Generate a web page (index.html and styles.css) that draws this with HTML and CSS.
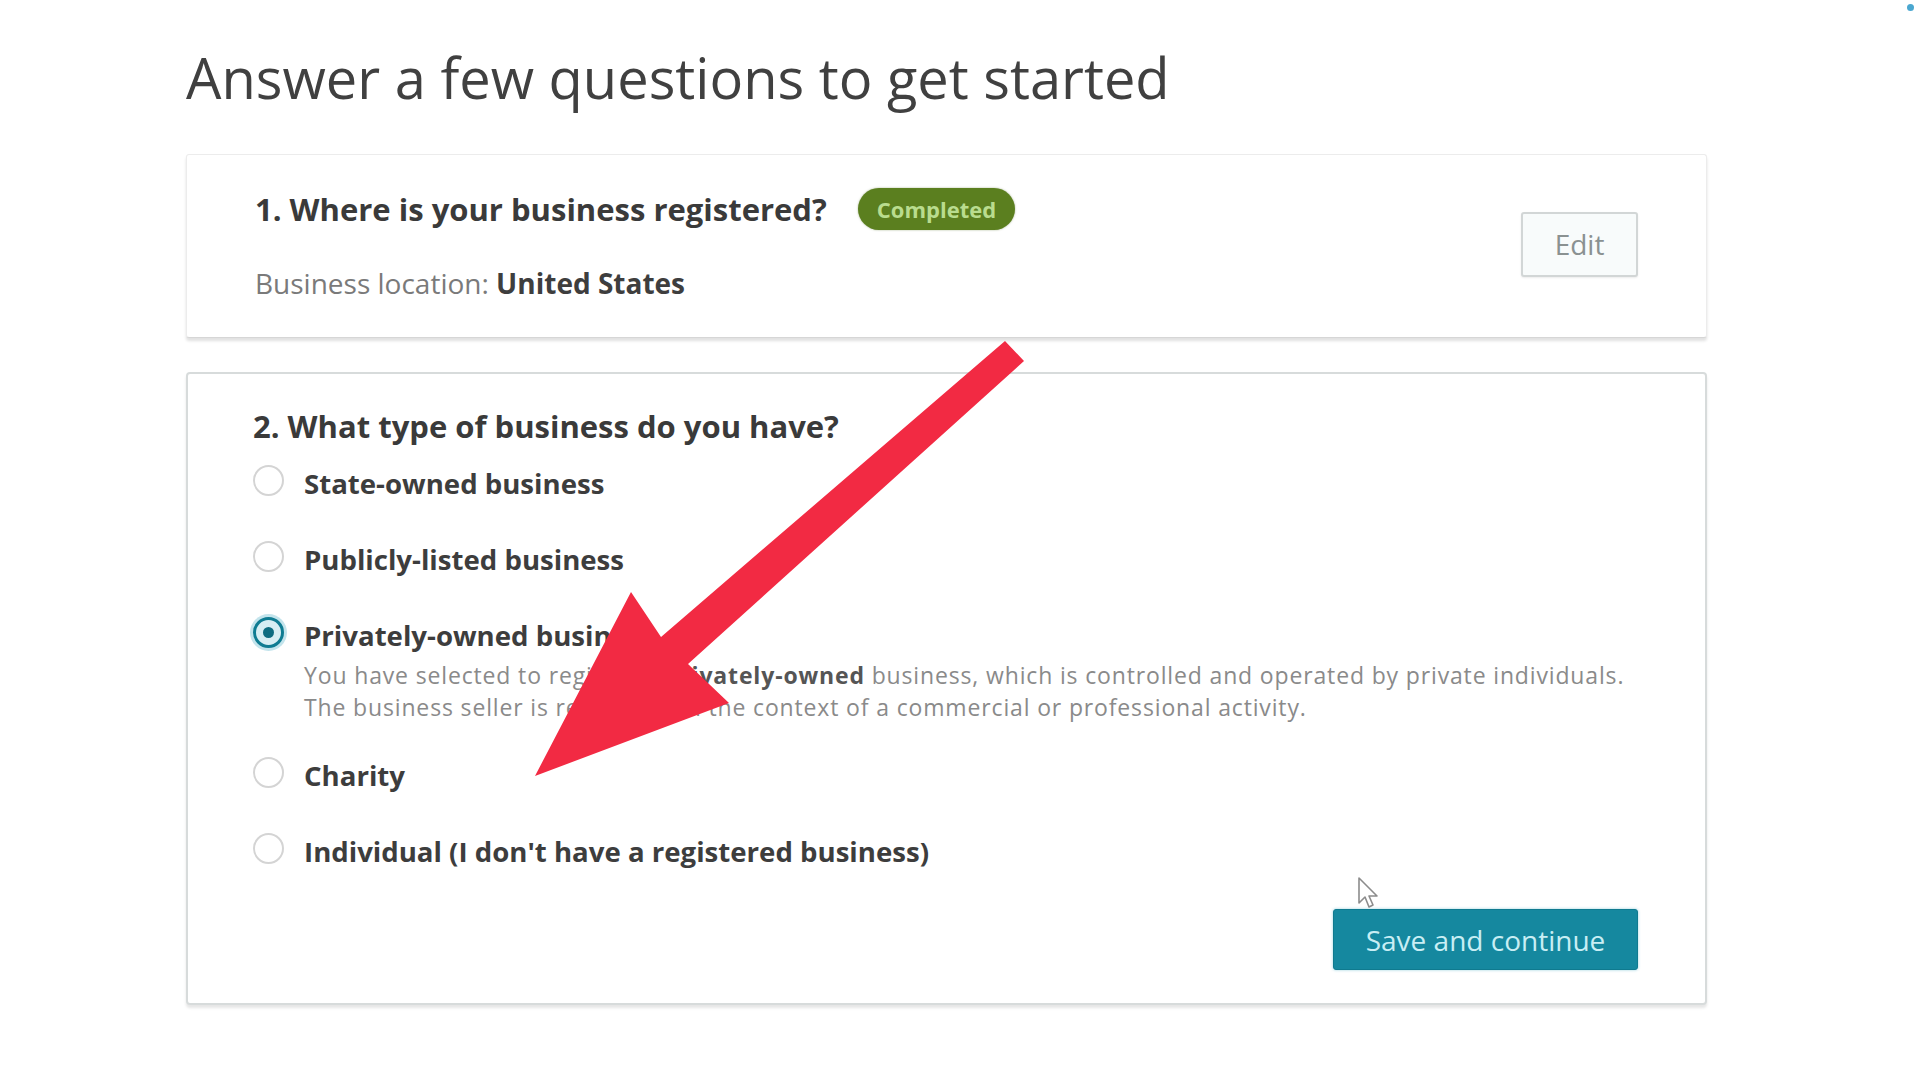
FILE: index.html
```html
<!DOCTYPE html>
<html lang="en">
<head>
<meta charset="utf-8">
<title>Answer a few questions to get started</title>
<link rel="stylesheet" href="styles.css">
</head>
<body>
<div class="page">
  <h1 class="title">Answer a few questions to get started</h1>

  <section class="card card-done">
    <div class="card-main">
      <div class="q-row">
        <h2 class="question">1. Where is your business registered?</h2>
        <span class="badge">Completed</span>
      </div>
      <p class="location">Business location: <b>United States</b></p>
    </div>
    <button class="btn-edit" type="button">Edit</button>
  </section>

  <section class="card card-active">
    <h2 class="question">2. What type of business do you have?</h2>
    <div class="options">
      <label class="option"><span class="radio"></span><span class="opt-text">State-owned business</span></label>
      <label class="option"><span class="radio"></span><span class="opt-text">Publicly-listed business</span></label>
      <div class="option-group">
        <label class="option"><span class="radio radio-on"></span><span class="opt-text">Privately-owned business</span></label>
        <p class="desc">You have selected to register a <b>privately-owned</b> business, which is controlled and operated by private individuals.<br>The business seller is registered in the context of a commercial or professional activity.</p>
      </div>
      <label class="option"><span class="radio"></span><span class="opt-text">Charity</span></label>
      <label class="option"><span class="radio"></span><span class="opt-text">Individual (I don't have a registered business)</span></label>
    </div>
    <div class="actions">
      <button class="btn-save" type="button">Save and continue</button>
    </div>
  </section>
</div>

<svg class="arrow" width="1915" height="1077" viewBox="0 0 1915 1077" aria-hidden="true">
  <polygon points="1005,341 1024,361 688,664 729,703 535,776 631,592 661,637" fill="#f22a43"/>
</svg>

<svg class="cursor" width="24" height="34" viewBox="0 0 24 34" aria-hidden="true">
  <path d="M2 2 L2 27 L8 21 L12 31 L16 29 L12 20 L20 20 Z" fill="#ffffff" stroke="#8c8c8c" stroke-width="1.6" stroke-linejoin="round"/>
</svg>

<span class="corner-dot"></span>
</body>
</html>
```

FILE: styles.css
```css
html, body {
  margin: 0;
  padding: 0;
  background: #ffffff;
}

body {
  font-family: "Open Sans", "Noto Sans", "Liberation Sans", sans-serif;
  color: #3a3a3a;
  width: 1915px;
  height: 1077px;
  overflow: hidden;
  position: relative;
}

.page {
  margin-left: 186px;
  width: 1521px;
  padding-top: 45px;
}

.title {
  margin: 0 0 45px 0;
  font-size: 56px;
  line-height: 64px;
  font-weight: 400;
  color: #404040;
  letter-spacing: 0;
}

.card {
  box-sizing: border-box;
  background: #ffffff;
}

.card-done {
  display: flex;
  align-items: center;
  justify-content: space-between;
  height: 184px;
  padding: 33px 68px 37px 68px;
  border: 1px solid #ececec;
  border-bottom: 1px solid #d6d6d6;
  box-shadow: 0 3px 3px rgba(0, 0, 0, 0.12);
  border-radius: 3px;
}

.card-main {
  display: flex;
  flex-direction: column;
  gap: 35px;
}

.q-row {
  display: flex;
  align-items: center;
  gap: 31px;
}

.question {
  margin: 0;
  font-size: 31px;
  line-height: 40px;
  font-weight: 700;
  color: #3a3a3a;
}

.badge {
  display: inline-flex;
  align-items: center;
  justify-content: center;
  height: 42px;
  padding: 0 19px;
  border-radius: 21px;
  background: #5b7f1f;
  color: #b9dc8e;
  font-size: 22px;
  font-weight: 700;
  box-sizing: border-box;
  box-shadow: 0 0 2px rgba(70, 100, 20, 0.5);
}

.location {
  margin: 0;
  font-size: 28px;
  line-height: 36px;
  color: #7a7a7a;
}

.location b {
  color: #3e3e3e;
  font-weight: 700;
}

.btn-edit {
  width: 117px;
  height: 65px;
  border: 2px solid #d2d6d6;
  border-radius: 3px;
  background: #f8fbfb;
  color: #8a9191;
  font-family: inherit;
  font-size: 28px;
  padding: 0;
  box-shadow: 0 1px 2px rgba(0, 0, 0, 0.08);
}

.card-active {
  margin-top: 34px;
  height: 633px;
  padding: 32px 66px 32px 65px;
  border: 2px solid #d7dbdb;
  border-radius: 4px;
  box-shadow: 0 3px 3px rgba(0, 0, 0, 0.10);
}

.options {
  display: flex;
  flex-direction: column;
  gap: 40px;
  margin-top: 19px;
}

.option {
  display: flex;
  align-items: center;
  gap: 20px;
  height: 36px;
}

.opt-text {
  font-size: 27.6px;
  line-height: 36px;
  font-weight: 700;
  color: #3d3d3d;
}

.radio {
  box-sizing: border-box;
  width: 31px;
  height: 31px;
  border-radius: 50%;
  border: 2px solid #d4d4d4;
  background: #ffffff;
  flex: none;
  position: relative;
  top: -3px;
}

.radio-on {
  border: 3px solid #0f7c92;
  background: #d7eef3;
  box-shadow: 0 0 0 3px #c3e4ec;
}

.radio-on::after {
  content: "";
  position: absolute;
  left: 50%;
  top: 50%;
  width: 11px;
  height: 11px;
  margin: -5.5px 0 0 -5.5px;
  border-radius: 50%;
  background: #0d6c80;
}

.desc {
  margin: 6px 0 -6px 51px;
  font-size: 23px;
  line-height: 32px;
  letter-spacing: 0.85px;
  color: #8a8a8a;
}

.desc b {
  color: #555555;
  font-weight: 700;
}

.actions {
  display: flex;
  justify-content: flex-end;
  margin-top: 40px;
  margin-right: 1px;
}

.btn-save {
  width: 305px;
  height: 61px;
  border: 1px solid #0f7a8f;
  border-radius: 3px;
  background: #15889f;
  color: #c8eef4;
  font-family: inherit;
  font-size: 28px;
  padding: 0;
  box-shadow: 0 0 3px rgba(20, 150, 180, 0.45);
}

.arrow {
  position: absolute;
  left: 0;
  top: 0;
  pointer-events: none;
}

.cursor {
  position: absolute;
  left: 1357px;
  top: 876px;
}

.corner-dot {
  position: absolute;
  left: 1907px;
  top: 4px;
  width: 7px;
  height: 7px;
  border-radius: 50%;
  background: #4aa7d0;
}
```
